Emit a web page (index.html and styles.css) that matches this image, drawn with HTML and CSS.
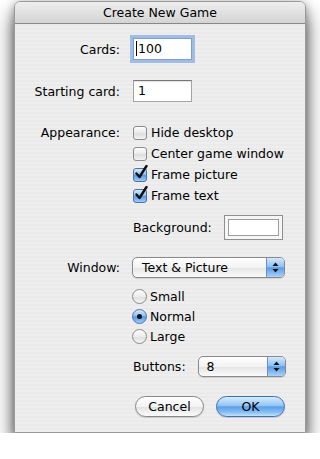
FILE: index.html
```html
<!DOCTYPE html>
<html lang="en">
<head>
    <meta charset="UTF-8">
    <meta name="viewport" content="width=device-width, initial-scale=1.0">
    <title>Create New Game</title>
    <link rel="stylesheet" href="styles.css">
</head>
<body>
    <div class="window">
        <div class="titlebar">Create New Game</div>
        <div class="content">
            <div class="row">
                <span class="label">Cards:</span>
                <div class="field focused"><span class="caret"></span>100</div>
            </div>
            <div class="row row-start">
                <span class="label">Starting card:</span>
                <div class="field">1</div>
            </div>

            <!-- Appearance options -->
            <div class="row row-appearance">
                <span class="label label-top">Appearance:</span>
                <div class="checks">
                    <div class="check"><span class="box"></span>Hide desktop</div>
                    <div class="check"><span class="box"></span>Center game window</div>
                    <div class="check"><span class="box checked"><svg width="14" height="15" viewBox="0 0 14 15"><path d="M2.5 8.5 L5.5 12 L12.5 1" fill="none" stroke="#111" stroke-width="2.4" stroke-linecap="round" stroke-linejoin="round"/></svg></span>Frame picture</div>
                    <div class="check"><span class="box checked"><svg width="14" height="15" viewBox="0 0 14 15"><path d="M2.5 8.5 L5.5 12 L12.5 1" fill="none" stroke="#111" stroke-width="2.4" stroke-linecap="round" stroke-linejoin="round"/></svg></span>Frame text</div>
                </div>
            </div>
            <div class="row row-bg">
                <span></span>
                <div class="inline">
                    <span>Background:</span>
                    <div class="well"><div class="swatch"></div></div>
                </div>
            </div>

            <!-- Window size -->
            <div class="row row-window">
                <span class="label">Window:</span>
                <div class="popup popup-wide">
                    <span class="popup-text">Text &amp; Picture</span>
                    <span class="popup-arrows"><svg width="7" height="11" viewBox="0 0 7 11"><path d="M3.5 0.5 L6.5 4 L0.5 4 Z M0.5 7 L6.5 7 L3.5 10.5 Z" fill="#111"/></svg></span>
                </div>
            </div>
            <div class="row row-radios">
                <span></span>
                <div class="radios">
                    <div class="radio"><span class="dot"></span>Small</div>
                    <div class="radio"><span class="dot selected"></span>Normal</div>
                    <div class="radio"><span class="dot"></span>Large</div>
                </div>
            </div>
            <div class="row row-buttons">
                <span></span>
                <div class="inline inline-buttons">
                    <span>Buttons:</span>
                    <div class="popup popup-small">
                        <span class="popup-text">8</span>
                        <span class="popup-arrows"><svg width="7" height="11" viewBox="0 0 7 11"><path d="M3.5 0.5 L6.5 4 L0.5 4 Z M0.5 7 L6.5 7 L3.5 10.5 Z" fill="#111"/></svg></span>
                    </div>
                </div>
            </div>

            <div class="actions">
                <button class="btn">Cancel</button>
                <button class="btn btn-default">OK</button>
            </div>
        </div>
    </div>
</body>
</html>
```

FILE: styles.css
```css
body {
    margin: 0;
    background-color: #fff;
    font-family: "DejaVu Sans", sans-serif;
    font-size: 12.5px;
    color: #000;
}
.window {
    box-sizing: border-box;
    width: 292px;
    height: 432px;
    margin: 1px 0 0 14px;
    border: 1px solid #9a9a9a;
    border-radius: 6px 6px 0 0;
    background: repeating-linear-gradient(to bottom, #eeeeee 0, #eeeeee 2px, #eaeaea 2px, #eaeaea 4px);
    box-shadow: 0 12px 20px rgba(0, 0, 0, 0.7), 0 2px 8px rgba(0, 0, 0, 0.3);
}
.titlebar {
    height: 21px;
    line-height: 21px;
    border-bottom: 1px solid #888;
    border-radius: 5px 5px 0 0;
    background: linear-gradient(#eeeeee, #d4d4d4);
    text-align: center;
    font-size: 12.5px;
}
.content {
    padding: 14px 20px 0 0;
}
.row {
    display: grid;
    grid-template-columns: 105px 1fr;
    column-gap: 12px;
    align-items: center;
}
.label {
    text-align: right;
}
.label-top {
    align-self: start;
    line-height: 21px;
}
.row-start {
    margin-top: 20px;
}
.row-appearance {
    margin-top: 20px;
}
.row-bg {
    margin-top: 9px;
}
.row-window {
    margin-top: 17px;
}
.row-radios {
    margin-top: 8px;
}
.row-buttons {
    margin-top: 10px;
}

/* text fields */
.field {
    box-sizing: border-box;
    width: 59px;
    height: 22px;
    margin-left: 1px;
    padding-left: 4px;
    line-height: 20px;
    background-color: #fff;
    border: 1px solid #a4a4a4;
    border-top-color: #777;
    box-shadow: inset 0 1px 1px rgba(0, 0, 0, 0.12);
}
.field.focused {
    border-color: #7d9fd4;
    box-shadow: 0 0 0 3px rgba(128, 168, 222, 0.7);
    padding-left: 2px;
}
.caret {
    display: inline-block;
    width: 1px;
    height: 15px;
    background-color: #000;
    vertical-align: -3px;
    margin-right: 1px;
}

/* checkboxes */
.check {
    display: flex;
    align-items: center;
    height: 21px;
}
.box {
    position: relative;
    box-sizing: border-box;
    width: 14px;
    height: 14px;
    margin: 0 4px 0 1px;
    border: 1px solid #8c8c8c;
    border-radius: 3px;
    background: linear-gradient(#fdfdfd, #e9e9e9 50%, #dcdcdc 51%, #f3f3f3);
}
.box.checked {
    border-color: #4f72a6;
    background: linear-gradient(#d6eafd, #8fc1f3 45%, #5598e6 52%, #9fcdf8);
}
.box svg {
    position: absolute;
    left: 0;
    top: -4px;
}

/* colour well */
.inline {
    display: flex;
    align-items: center;
    gap: 12px;
    margin-left: 1px;
}
.well {
    box-sizing: border-box;
    width: 59px;
    height: 25px;
    padding: 3px;
    border: 1px solid #8e8e8e;
    background-color: #f6f6f6;
}
.swatch {
    box-sizing: border-box;
    height: 100%;
    border: 1px solid #9c9c9c;
    background-color: #fff;
}

/* popups */
.popup {
    box-sizing: border-box;
    display: flex;
    height: 21px;
    border: 1px solid #8a8a8a;
    border-radius: 5px;
    background: linear-gradient(#ffffff, #f2f2f2 50%, #e4e4e4 51%, #fbfbfb);
    box-shadow: 0 1px 1px rgba(0, 0, 0, 0.12);
}
.popup-wide {
    width: 153px;
}
.popup-small {
    width: 88px;
}
.popup-text {
    flex: 1;
    line-height: 19px;
    padding-left: 9px;
}
.popup-small .popup-text {
    padding-left: 8px;
}
.popup-arrows {
    display: flex;
    align-items: center;
    justify-content: center;
    width: 17px;
    border-left: 1px solid #6c8fc4;
    border-radius: 0 4px 4px 0;
    background: linear-gradient(#d4e8fc, #8fc1f3 45%, #5a9be6 52%, #a8d2f9);
}
.inline-buttons {
    gap: 12px;
}

/* radios */
.radio {
    display: flex;
    align-items: center;
    height: 20px;
}
.dot {
    position: relative;
    box-sizing: border-box;
    width: 15px;
    height: 15px;
    margin-right: 3px;
    border: 1px solid #8a8a8a;
    border-radius: 50%;
    background: linear-gradient(#fdfdfd, #ececec 50%, #dddddd 51%, #f5f5f5);
}
.dot.selected {
    border-color: #4f72a6;
    background: linear-gradient(#d6eafd, #8fc1f3 45%, #5598e6 52%, #9fcdf8);
}
.dot.selected::after {
    content: "";
    position: absolute;
    left: 4px;
    top: 4px;
    width: 5px;
    height: 5px;
    border-radius: 50%;
    background-color: #111;
}

/* buttons */
.actions {
    display: flex;
    justify-content: flex-end;
    gap: 12px;
    margin-top: 19px;
}
.btn {
    box-sizing: border-box;
    width: 69px;
    height: 21px;
    padding: 0;
    font-family: inherit;
    font-size: 12.5px;
    color: #000;
    border: 1px solid #888;
    border-radius: 11px;
    background: linear-gradient(#ffffff, #f3f3f3 50%, #e2e2e2 51%, #fbfbfb);
    box-shadow: 0 1px 1px rgba(0, 0, 0, 0.15);
}
.btn-default {
    border-color: #3f6fb3;
    background: linear-gradient(#d7ebfd, #93c5f5 45%, #5b9fea 52%, #86bff4 80%, #c4e3fd);
}
```
